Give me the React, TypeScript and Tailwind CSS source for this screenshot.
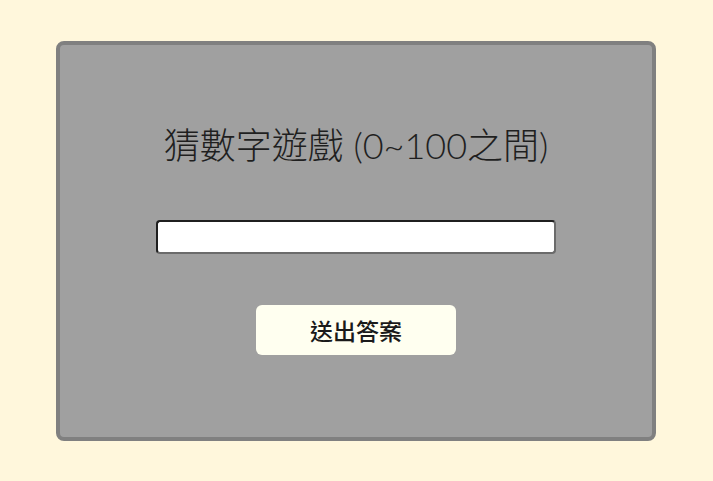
import React, { useState } from 'react';

export default function App() {
  const [guess, setGuess] = useState('');

  return (
    <div className="min-h-screen bg-[#fff7dc] pt-[41px] font-['Noto_Sans_CJK_TC','Noto_Sans',sans-serif]">
      <div className="ml-[56px] flex h-[400px] w-[600px] flex-col items-center rounded-[8px] border-4 border-[#808080] bg-[#a0a0a0]">
        <h1 className="mt-[75px] h-[50px] font-['Lato','Noto_Sans_CJK_TC',sans-serif] text-[36px] leading-[50px] font-light text-[#1f1f1f]">
          猜數字遊戲 (0~100之間)
        </h1>
        <input
          type="text"
          value={guess}
          onChange={(e) => setGuess(e.target.value)}
          className="mt-[50px] h-[34px] w-[400px] rounded-[4px] border-2 border-t-[#1f1f1f] border-l-[#1f1f1f] border-r-[#6b6b6b] border-b-[#6b6b6b] bg-white px-2 text-lg outline-none"
        />
        <button className="mt-[51px] h-[50px] w-[200px] rounded-[6px] bg-[#fffff0] text-[23px] font-medium text-[#1a1a1a]">
          送出答案
        </button>
      </div>
    </div>
  );
}
